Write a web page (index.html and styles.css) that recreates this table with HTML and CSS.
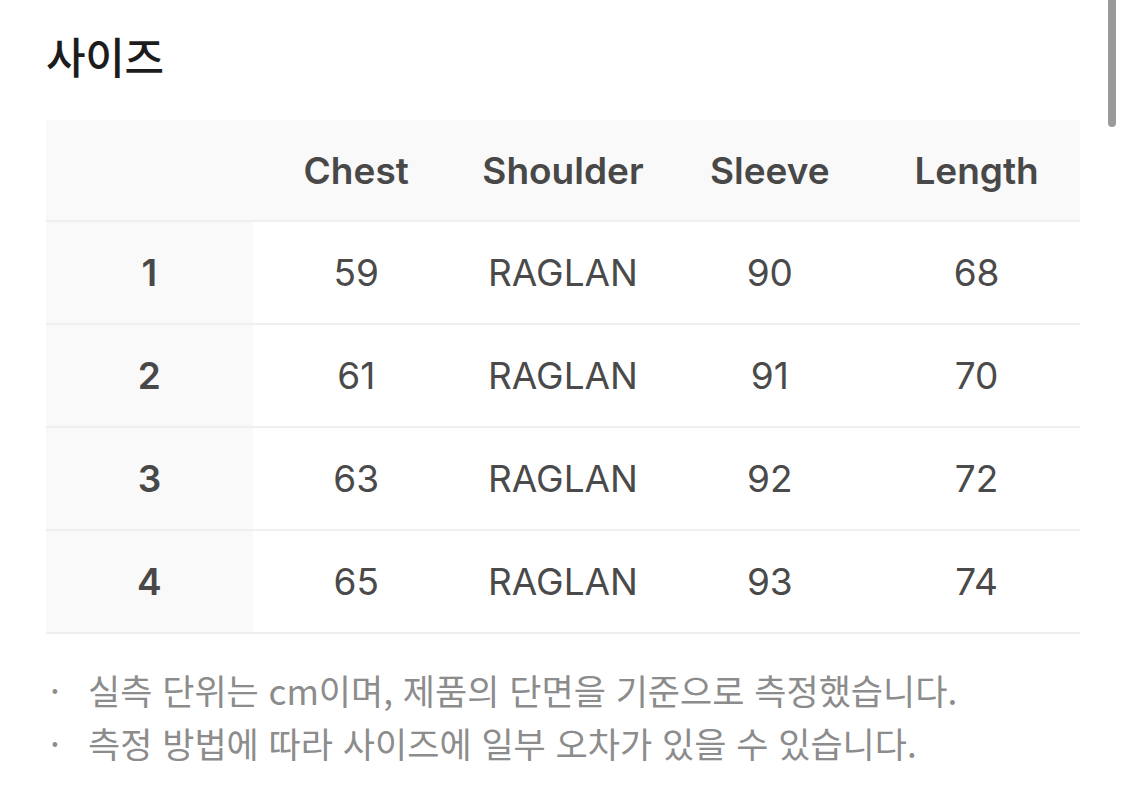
FILE: index.html
```html
<!DOCTYPE html>
<html lang="ko">
<head>
<meta charset="utf-8">
<title>사이즈</title>
<link rel="stylesheet" href="styles.css">
</head>
<body>
<main class="page">
  <h1 class="title">사이즈</h1>
  <table class="size-table">
    <thead>
      <tr>
        <th class="corner"></th>
        <th>Chest</th>
        <th>Shoulder</th>
        <th>Sleeve</th>
        <th>Length</th>
      </tr>
    </thead>
    <tbody>
      <tr><th class="size">1</th><td>59</td><td>RAGLAN</td><td>90</td><td>68</td></tr>
      <tr><th class="size">2</th><td>61</td><td>RAGLAN</td><td>91</td><td>70</td></tr>
      <tr><th class="size">3</th><td>63</td><td>RAGLAN</td><td>92</td><td>72</td></tr>
      <tr><th class="size">4</th><td>65</td><td>RAGLAN</td><td>93</td><td>74</td></tr>
    </tbody>
  </table>
  <ul class="notes">
    <li>실측 단위는 cm이며, 제품의 단면을 기준으로 측정했습니다.</li>
    <li>측정 방법에 따라 사이즈에 일부 오차가 있을 수 있습니다.</li>
  </ul>
</main>
<div class="scrollbar"></div>
</body>
</html>
```
FILE: styles.css
```css
html, body {
  margin: 0;
  padding: 0;
  background: #ffffff;
}
body {
  font-family: "Inter", "Noto Sans CJK KR", sans-serif;
  width: 1125px;
  height: 793px;
  overflow: hidden;
  position: relative;
}
.page {
  padding: 28px 45px 0 46px;
}
.title {
  margin: 0;
  font-family: "Noto Sans CJK KR", sans-serif;
  font-weight: 500;
  font-size: 43px;
  line-height: 54px;
  color: #1c1c1c;
  letter-spacing: -0.3px;
}
.size-table {
  margin-top: 38px;
  width: 1034px;
  border-collapse: collapse;
  table-layout: fixed;
}
.size-table th,
.size-table td {
  height: 101px;
  padding: 0;
  text-align: center;
  vertical-align: middle;
  border-bottom: 2px solid #efefef;
}
.size-table thead th {
  background: #f9f9f9;
  height: 100px;
  font-weight: 600;
  font-size: 37px;
  color: #484848;
}
.size-table th.size {
  background: #f9f9f9;
  font-weight: 600;
  font-size: 37px;
  color: #484848;
}
.size-table td {
  font-weight: 400;
  font-size: 37px;
  color: #4a4a4a;
}
.notes {
  list-style: none;
  margin: 29px 0 0;
  padding: 0;
  font-family: "Noto Sans CJK KR", sans-serif;
  font-size: 35px;
  line-height: 53px;
  color: #8c8c8c;
}
.notes li {
  position: relative;
  padding-left: 42px;
}
.notes li::before {
  content: "·";
  position: absolute;
  left: 4px;
  top: 0;
  color: #8c8c8c;
}
.scrollbar {
  position: absolute;
  top: 0;
  left: 1108px;
  width: 8px;
  height: 127px;
  border-radius: 0 0 4px 4px;
  background: #9a9a9a;
}
```
